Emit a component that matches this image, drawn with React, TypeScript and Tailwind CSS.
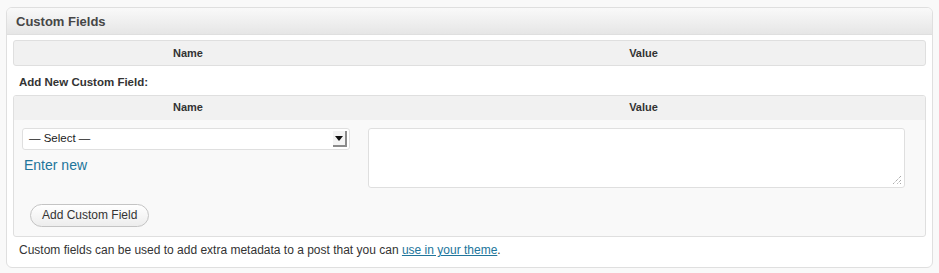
export default function App() {
  return (
    <div className="h-[273px] w-[939px] bg-[#f9f9f9] pl-[6px] pt-[7px] font-['Liberation_Sans',Arial,sans-serif] text-[#333]">
      <div className="h-[261px] w-[927px] overflow-hidden rounded-[6px] border border-[#dfdfdf] bg-white">
        <div className="h-[27px] border-b border-[#dfdfdf] bg-gradient-to-b from-[#f9f9f9] to-[#e6e6e6] pl-[9px] text-[13px] font-bold leading-[27px] text-[#464646]">
          Custom Fields
        </div>

        <div className="px-[6px] pt-[5px]">
          <div className="grid h-[26px] grid-cols-[348px_1fr] rounded-[3px] border border-[#dfdfdf] bg-[#f1f1f1] text-[11px] font-bold leading-[24px]">
            <div className="text-center">Name</div>
            <div className="text-center">Value</div>
          </div>

          <div className="h-[29px] pl-[6px] pt-[9px] text-[11.5px] font-bold leading-[14px]">Add New Custom Field:</div>

          <div className="h-[142px] overflow-hidden rounded-[3px] border border-[#dfdfdf] bg-[#f9f9f9]">
            <div className="grid h-[24px] grid-cols-[348px_1fr] bg-[#f1f1f1] text-[11px] font-bold leading-[23px]">
              <div className="text-center">Name</div>
              <div className="text-center">Value</div>
            </div>

            <div className="grid grid-cols-[348px_1fr] pt-[8px]">
              <div className="pl-[8px]">
                <div className="flex h-[22px] w-[328px] items-center justify-between rounded-[3px] border border-[#dfdfdf] bg-white pl-[6px] pr-[2px] text-[11.5px] text-[#222]">
                  <span>— Select —</span>
                  <span className="flex h-[16px] w-[14px] items-center justify-center border-b-2 border-r-2 border-[#8a8a8a] bg-[#f4f4f4]">
                    <svg width="8" height="5" viewBox="0 0 8 5">
                      <path d="M0 0h8L4 5z" fill="#111" />
                    </svg>
                  </span>
                </div>
                <a href="#" className="mt-[7px] block pl-[2px] text-[14px] leading-[16px] text-[#21759b]">
                  Enter new
                </a>
              </div>
              <div className="pl-[6px]">
                <div className="relative h-[60px] w-[537px] rounded-[3px] border border-[#dfdfdf] bg-white">
                  <svg className="absolute bottom-[2px] right-[2px]" width="10" height="10" viewBox="0 0 10 10">
                    <path d="M9 1L1 9M9 5L5 9M9 8L8 9" stroke="#888" strokeWidth="1" strokeDasharray="1 1" />
                  </svg>
                </div>
              </div>
            </div>

            <div className="pl-[16px] pt-[16px]">
              <button className="block h-[23px] rounded-full border border-[#c4c4c4] bg-gradient-to-b from-white to-[#ededed] px-[11px] text-[12px] leading-[21px] text-[#333]">
                Add Custom Field
              </button>
            </div>
          </div>

          <p className="pl-[6px] pt-[5px] text-[12px] leading-[16px] text-[#333]">
            Custom fields can be used to add extra metadata to a post that you can{" "}
            <a href="#" className="text-[#21759b] underline">
              use in your theme
            </a>
            .
          </p>
        </div>
      </div>
    </div>
  );
}
